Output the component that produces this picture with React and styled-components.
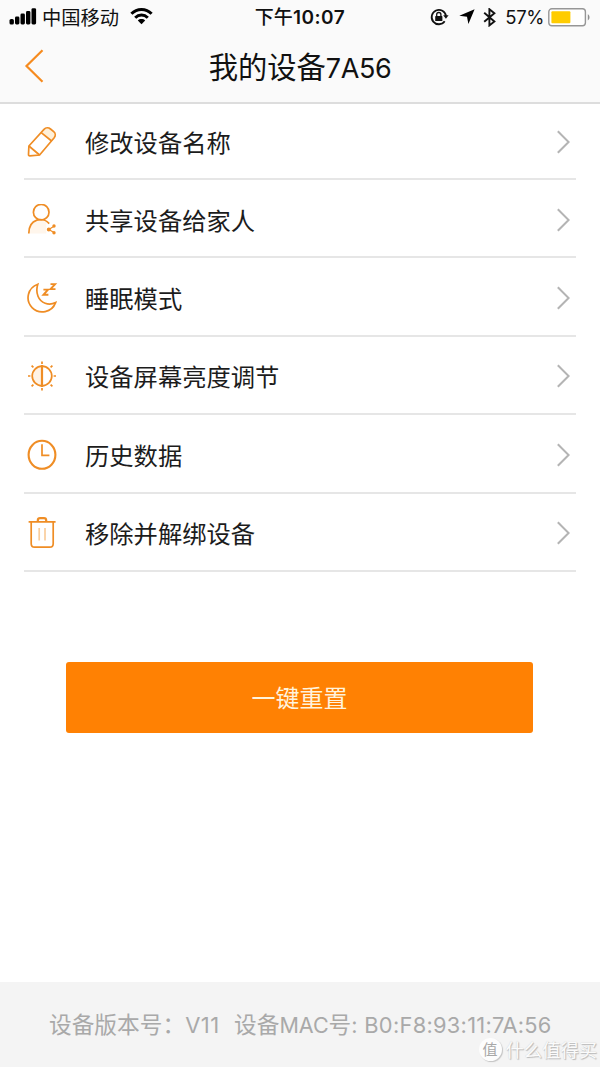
import styled, { createGlobalStyle } from 'styled-components';

const menus = [
  { name: '修改设备名称', icon: PencilIcon },
  { name: '共享设备给家人', icon: ShareIcon },
  { name: '睡眠模式', icon: SleepIcon },
  { name: '设备屏幕亮度调节', icon: BrightnessIcon },
  { name: '历史数据', icon: ClockIcon },
  { name: '移除并解绑设备', icon: TrashIcon },
];

const App = () => {
  return (
    <>
      <GlobalStyle />
      <Page>
        <Header>
          <StatusBar>
            <StatusLeft>
              <SignalIcon />
              <Carrier>中国移动</Carrier>
              <WifiIcon />
            </StatusLeft>
            <Time>下午<Latin $size="19px" $weight="600" $spacing="0.5px">10:07</Latin></Time>
            <StatusRight>
              <LockIcon />
              <LocationIcon />
              <BluetoothIcon />
              <Percent>57%</Percent>
              <BatteryIcon />
            </StatusRight>
          </StatusBar>
          <NavBar>
            <BackButton aria-label="返回"><BackIcon /></BackButton>
            <Title>我的设备<Latin $size="27px" $spacing="-0.4px">7A56</Latin></Title>
          </NavBar>
        </Header>

        <MenuList>
          {menus.map(({ name, icon: Icon }) => (
            <MenuItem key={name}>
              <IconBox><Icon /></IconBox>
              <MenuName>{name}</MenuName>
              <ArrowIcon />
            </MenuItem>
          ))}
        </MenuList>

        <ResetButton>一键重置</ResetButton>

        <Footer>
          <Version>设备版本号：<Latin $size="22px" $spacing="0.5px">V11</Latin></Version>
          <Mac>设备<Latin $size="21.5px">MAC</Latin>号<Latin $size="21.8px" $spacing="0.3px">: B0:F8:93:11:7A:56</Latin></Mac>
          <Watermark><Badge>值</Badge>什么值得买</Watermark>
        </Footer>
      </Page>
    </>
  );
};
export default App;

function SignalIcon() {
  return (
    <svg width="28" height="18" viewBox="0 0 28 18">
      <rect x="0.5" y="11" width="4.4" height="5.5" rx="1.6" />
      <rect x="6" y="8.5" width="4.4" height="8" rx="1.4" />
      <rect x="11.5" y="5.5" width="4.4" height="11" rx="1.4" />
      <rect x="17" y="3" width="4.4" height="13.5" rx="1.4" />
      <rect x="22.5" y="0.2" width="4.6" height="16.3" rx="1.4" />
    </svg>
  );
}

function WifiIcon() {
  return (
    <svg width="24" height="18" viewBox="0 0 24 18" fill="none" stroke="#000" strokeWidth="3">
      <path d="M1.4 5.8C7 .1 16 .1 21.6 5.8" />
      <path d="M5.2 9.8C8.8 6.2 14.2 6.2 17.8 9.8" />
      <path d="M11.5 16.2L7.8 12.5C9.8 10.6 13.2 10.6 15.2 12.5Z" fill="#000" stroke="none" />
    </svg>
  );
}

function LockIcon() {
  return (
    <svg width="19" height="18" viewBox="0 0 19 18" fill="none" stroke="#111" strokeWidth="1.8">
      <path d="M14.7 13.3A7.2 7.2 0 1 1 16 8" />
      <path d="M13.2 7.3h5.4l-2.7 3.5Z" fill="#111" stroke="none" />
      <rect x="5.2" y="8.1" width="7.2" height="5" rx=".6" fill="#111" stroke="none" />
      <path d="M6.7 8.5V6.6a2.1 2.1 0 0 1 4.2 0v1.9" strokeWidth="1.3" />
    </svg>
  );
}

function LocationIcon() {
  return (
    <svg width="16" height="16" viewBox="0 0 16 16">
      <path d="M15.6 .2L9.4 15L8 7.8L.3 6.8Z" fill="#000" />
    </svg>
  );
}

function BluetoothIcon() {
  return (
    <svg width="13" height="19" viewBox="0 0 13 19" fill="none" stroke="#111" strokeWidth="1.9">
      <path d="M1.2 4.8L11.4 13.4L6.4 17.4V1.2L11.4 5.2L1.2 13.8" />
    </svg>
  );
}

function BatteryIcon() {
  return (
    <svg width="43" height="19" viewBox="0 0 43 19">
      <rect x=".8" y=".8" width="36.6" height="17" rx="3" fill="#fff" stroke="#969696" strokeWidth="1.4" />
      <rect x="3.4" y="3.2" width="19" height="12" rx="1" fill="#ffcc00" />
      <path d="M39.8 6.2c2.3 1.3 2.3 4.9 0 6.2Z" fill="#8f8f8f" />
    </svg>
  );
}

function BackIcon() {
  return (
    <svg width="22" height="36" viewBox="0 0 22 36" fill="none" stroke="#f68b1f" strokeWidth="2.2">
      <path d="M18.5 1.2L2.5 17L18.5 32.8" />
    </svg>
  );
}

function PencilIcon() {
  return (
    <LineSvg viewBox="0 0 32 32">
      <path d="M18.8 3.4c1.7-1.9 4.6-2 6.5-.4l3 2.6c1.9 1.6 2 4.2.5 6.1l-3 3.9L16 7Z" fill="#fff0d8" stroke="none" />
      <path d="M2.9 20L18 3.4c1.7-1.9 4.6-2 6.5-.4l3.2 2.6c1.9 1.6 2 4.2.5 6.1L13.6 29L3.8 29.8C2.8 29.8 2.5 29.4 2.5 28.5Z" />
      <path d="M2.9 20l10.7 9M15.2 6.6L25.6 15" />
    </LineSvg>
  );
}

function ShareIcon() {
  return (
    <LineSvg viewBox="0 0 32 32">
      <path d="M3.3 29.4C3.3 16.4 13 14.4 20.3 18.2V29.4Z" fill="#fff6ec" stroke="none" />
      <circle cx="15.2" cy="8.2" r="7.8" />
      <path d="M2.8 29.4C2.8 14.4 17.4 12.4 23.2 19.6" />
      <path d="M28 22.2L22.8 25.4L28 28.6" strokeWidth="1.2" />
      <path d="M28 20.3a1.7 1.7 0 1 1 0 3.4 1.7 1.7 0 0 1 0-3.4ZM22.8 23.4a2 2 0 1 1 0 4 2 2 0 0 1 0-4ZM28 27a1.7 1.7 0 1 1 0 3.4 1.7 1.7 0 0 1 0-3.4Z" fill="#ef8d25" stroke="none" />
    </LineSvg>
  );
}

function SleepIcon() {
  return (
    <LineSvg viewBox="0 0 32 32">
      <path d="M11.8 2.2A14.2 14.2 0 1 0 29.6 20.6C22.5 24.1 14.7 21 12 14.2C10.3 9.9 10.6 5.9 11.8 2.2Z" />
      <path d="M17.4 7.6h4.6L17.4 12.8h5M24.5 2.1h4.6l-4.6 5h5" strokeWidth="1.9" />
    </LineSvg>
  );
}

function BrightnessIcon() {
  return (
    <LineSvg viewBox="0 0 32 32">
      <path d="M16 6.2A9.8 9.8 0 0 0 16 25.8Z" fill="#fff3e6" stroke="none" />
      <circle cx="16" cy="16" r="9.8" />
      <path d="M16 5v22" strokeWidth="2.2" />
      <path d="M16 1.5v2.4M16 28.1v2.4M2 16h2.4M27.6 16H30M5.6 5.6l1.8 1.8M26.4 5.6l-1.8 1.8M5.6 26.4l1.8-1.8M26.4 26.4l-1.8-1.8" />
    </LineSvg>
  );
}

function ClockIcon() {
  return (
    <LineSvg viewBox="0 0 32 32">
      <ellipse cx="16" cy="15.8" rx="13.4" ry="14" strokeWidth="2.1" />
      <path d="M16 5.2v11.2h7.4" />
    </LineSvg>
  );
}

function TrashIcon() {
  return (
    <LineSvg viewBox="0 0 32 32">
      <path d="M2.6 4.8h27M5.2 4.8v22c0 2.2 1.2 3.4 3.4 3.4h15.2c2.2 0 3.4-1.2 3.4-3.4v-22" />
      <path d="M11.8 4.6V3.4c0-1.6.9-2.3 2.2-2.3h4c1.3 0 2.2.7 2.2 2.3v1.2" strokeWidth="2.2" />
      <path d="M13.2 11v12.6M19 11v12.6" stroke="#f9cd9c" />
    </LineSvg>
  );
}

function ArrowIcon() {
  return (
    <svg width="14" height="24" viewBox="0 0 14 24" fill="none" stroke="#b4b4b4" strokeWidth="2">
      <path d="M1.8 1.2L12.6 12L1.8 22.8" />
    </svg>
  );
}

const GlobalStyle = createGlobalStyle`
  * {
    box-sizing: border-box;
  }
  body {
    margin: 0;
    background: #fff;
    font-family: 'Noto Sans CJK SC', sans-serif;
  }
  svg {
    display: block;
    flex-shrink: 0;
  }
`

const Page = styled.div`
  width: 600px;
  height: 1067px;
  display: flex;
  flex-direction: column;
  background: #fff;
  overflow: hidden;
`
const Latin = styled.span`
  font-family: Inter, sans-serif;
  font-size: ${({ $size }) => $size};
  font-weight: ${({ $weight }) => $weight || 400};
  letter-spacing: ${({ $spacing }) => $spacing || '0'};
`
const Header = styled.header`
  height: 104px;
  background: #fafafa;
  border-bottom: solid 2px #dddddd;
`
const StatusBar = styled.div`
  height: 32px;
  padding: 0 9px;
  display: grid;
  grid-template-columns: 1fr auto 1fr;
  align-items: center;
  color: #111;
`
const StatusLeft = styled.div`
  display: flex;
  align-items: center;
`
const Carrier = styled.span`
  margin: 0 11px 0 5px;
  font-size: 19.3px;
  line-height: 32px;
`
const Time = styled.div`
  font-size: 19px;
  font-weight: 500;
  line-height: 32px;
  white-space: nowrap;
`
const StatusRight = styled.div`
  display: flex;
  align-items: center;
  justify-content: flex-end;

  & svg:nth-child(2) {
    margin-left: 10px;
  }
  & svg:nth-child(3) {
    margin-left: 8px;
  }
`
const Percent = styled.span`
  margin: 0 4px 0 9px;
  font-family: Inter, sans-serif;
  font-size: 18.5px;
  letter-spacing: -0.4px;
`
const NavBar = styled.div`
  height: 69px;
  display: grid;
  grid-template-columns: 60px 1fr 60px;
  align-items: center;
`
const BackButton = styled.button`
  height: 60px;
  padding: 0 0 0 24px;
  border: none;
  background: none;
`
const Title = styled.h1`
  margin: 0;
  font-size: 29.3px;
  font-weight: 400;
  line-height: 60px;
  text-align: center;
  color: #111;
`
const MenuList = styled.ul`
  margin: 0 24px;
  padding: 0;
  list-style: none;
`
const MenuItem = styled.li`
  height: 78.4px;
  display: flex;
  align-items: center;
  padding: 3px 6px 0 2px;
  border-bottom: solid 2px #e6e6e6;

  &:first-child {
    height: 76px;
    padding-top: 1px;
  }
`
const IconBox = styled.div`
  width: 59px;
`
const LineSvg = styled.svg`
  width: 32px;
  height: 32px;
  fill: none;
  stroke: #ef8d25;
  stroke-width: 1.7;
`
const MenuName = styled.span`
  flex: 1;
  font-size: 24.3px;
  line-height: 36px;
  color: #1c1c1c;
`
const ResetButton = styled.button`
  width: 467px;
  height: 71px;
  margin: 90px 0 0 66px;
  padding: 0 0 2px;
  border: none;
  border-radius: 3px;
  background: #ff8103;
  color: #fff3dc;
  font-family: inherit;
  font-size: 24px;
`
const Footer = styled.footer`
  position: relative;
  height: 85px;
  margin-top: auto;
  padding-left: 49px;
  display: flex;
  background: #f4f4f4;
  color: #a9a9a9;
  font-size: 22.7px;
  line-height: 84px;
  white-space: nowrap;
`
const Version = styled.span`
  width: 185px;
`
const Mac = styled.span``
// stamp over the bottom right corner
const Watermark = styled.div`
  position: absolute;
  right: 3px;
  bottom: 6px;
  display: flex;
  align-items: center;
  gap: 4px;
  font-size: 18.3px;
  line-height: 24px;
  color: #fbfbfb;
  text-shadow: 1px 1px 1px #b8b8b8, 0 0 1px #c8c8c8;
`
const Badge = styled.span`
  width: 23px;
  height: 23px;
  border-radius: 50%;
  background: #fdfdfd;
  box-shadow: 1px 1px 1px #c4c4c4;
  color: #a8a8a8;
  font-size: 15px;
  line-height: 22px;
  text-align: center;
  text-shadow: none;
`
